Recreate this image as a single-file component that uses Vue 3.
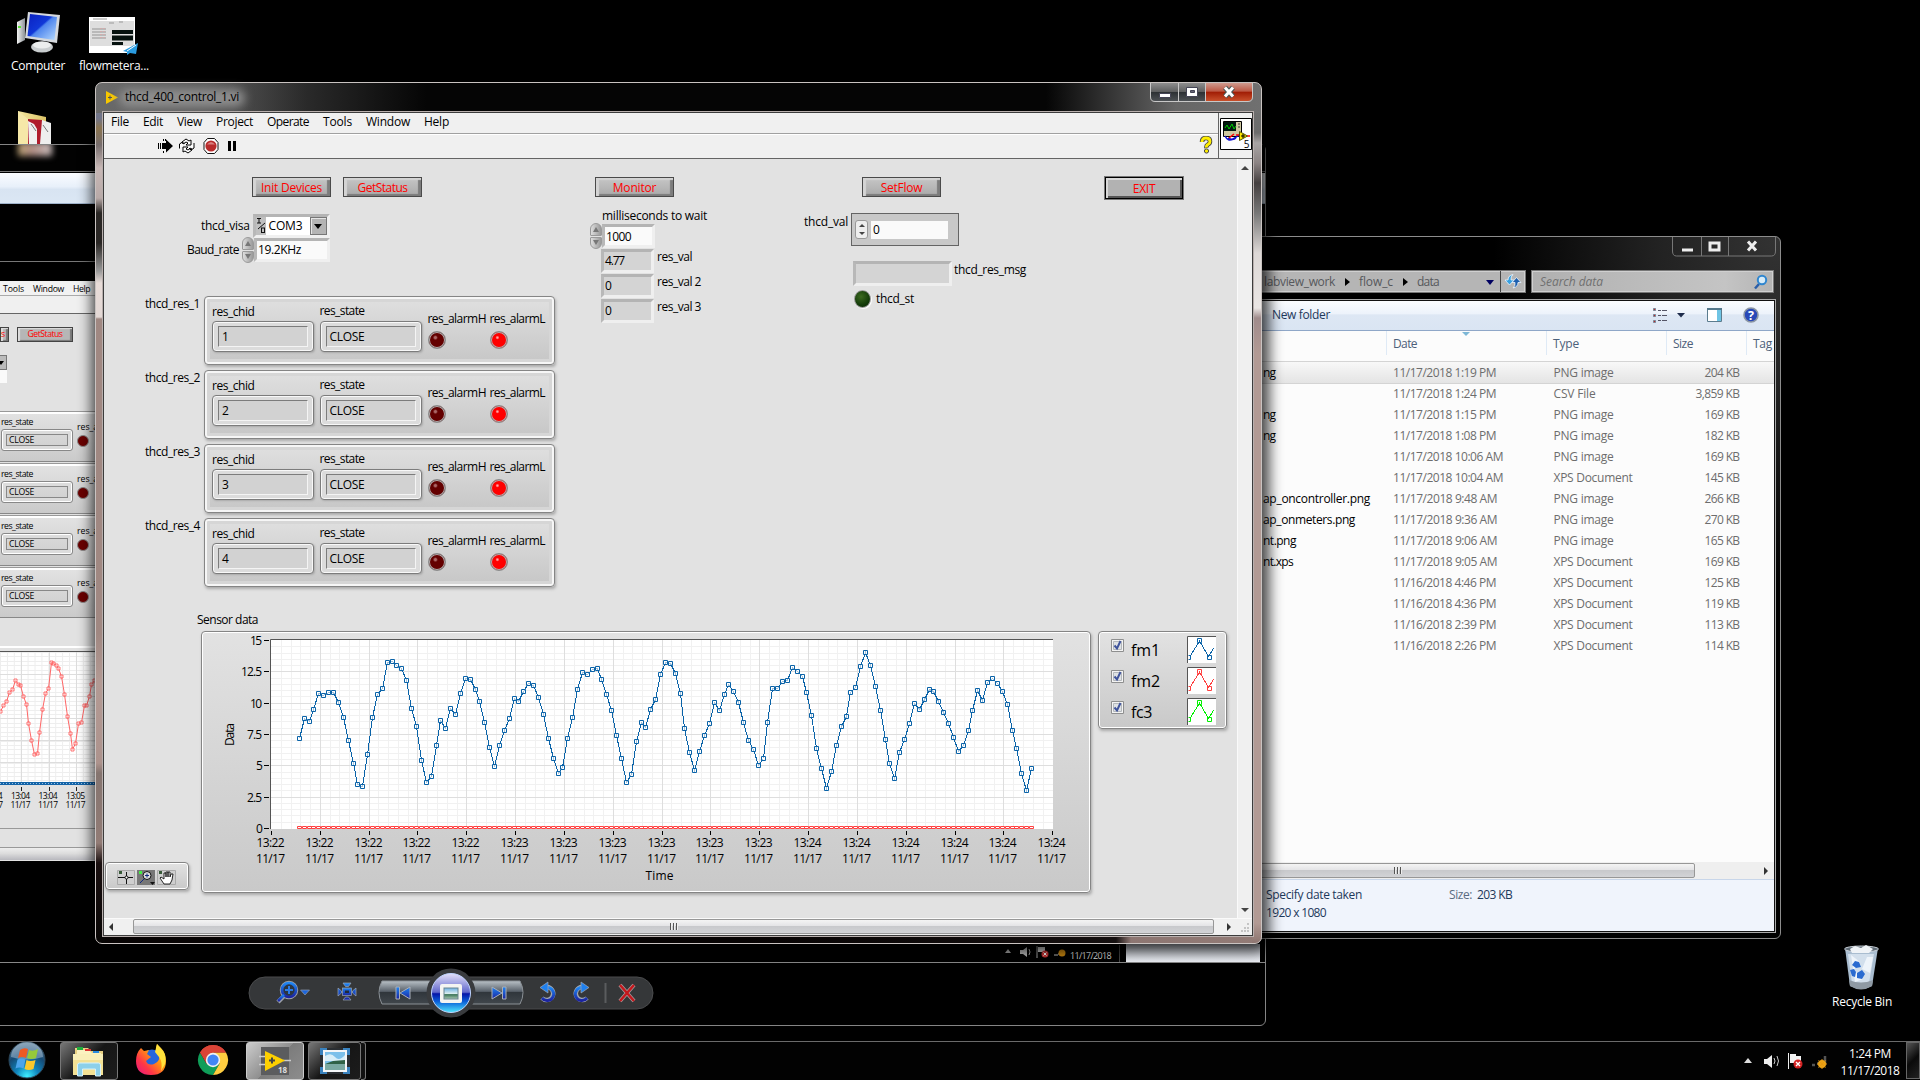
<script setup>
// Stretches or tightens a label so that it takes exactly the given width.
const vFit = {
  mounted(el, { value }) {
    const w = el.getBoundingClientRect().width
    el.style.letterSpacing = (value - w) / el.textContent.length + 'px'
  }
}

const menus = [['File', 18], ['Edit', 20], ['View', 25], ['Project', 37], ['Operate', 42], ['Tools', 29], ['Window', 44], ['Help', 25]]
const monitorVals = [['4.77', 19, 'res_val', 35], ['0', 6, 'res_val 2', 44], ['0', 6, 'res_val 3', 44]]
const files = [
  ['ng', 12, '11/17/2018 1:19 PM', 103, 'PNG image', 60, '204 KB', 35],
  ['', 0, '11/17/2018 1:24 PM', 103, 'CSV File', 42, '3,859 KB', 44],
  ['ng', 12, '11/17/2018 1:15 PM', 103, 'PNG image', 60, '169 KB', 35],
  ['ng', 12, '11/17/2018 1:08 PM', 103, 'PNG image', 60, '182 KB', 35],
  ['', 0, '11/17/2018 10:06 AM', 110, 'PNG image', 60, '169 KB', 35],
  ['', 0, '11/17/2018 10:04 AM', 110, 'XPS Document', 79, '145 KB', 35],
  ['ap_oncontroller.png', 107, '11/17/2018 9:48 AM', 104, 'PNG image', 60, '266 KB', 35],
  ['ap_onmeters.png', 92, '11/17/2018 9:36 AM', 104, 'PNG image', 60, '270 KB', 35],
  ['nt.png', 33, '11/17/2018 9:06 AM', 104, 'PNG image', 60, '165 KB', 35],
  ['nt.xps', 30, '11/17/2018 9:05 AM', 104, 'XPS Document', 79, '169 KB', 35],
  ['', 0, '11/16/2018 4:46 PM', 103, 'XPS Document', 79, '125 KB', 35],
  ['', 0, '11/16/2018 4:36 PM', 103, 'XPS Document', 79, '119 KB', 35],
  ['', 0, '11/16/2018 2:39 PM', 103, 'XPS Document', 79, '113 KB', 35],
  ['', 0, '11/16/2018 2:26 PM', 103, 'XPS Document', 79, '114 KB', 35]
]

const firstHalf = '328,415;343,355;358,364;370,328;385,280;400,286;415,277;430,277;445,307;460,352;475,421;490,490;502,553;517,559;532,463;547,352;562,283;577,265;592,187;607,184;619,196;634,205;649,241;664,325;679,379;694,481;709,547;724,529;739,436;751,361;766,385;781,325;796,343;811,280;826,235;841,238;856,268;868,304;883,367;898,442;913,499;928,436;943,391;958,355;973,295;985,304;1000,274;1015,250;1030,256;1045,292;1060,343;1075,415;1090,475;1105,520;1117,502;1132,415;1147,352;1162,268;1177,217;1192,223;1207,208;1222,205;1234,238;1249,283;1264,331;1279,406;1294,475;1309,547;1324,523;1339,424;1354,367;1366,382;1381,328;1396,298;1411,223;1426,187'
const secondHalf = '26,190;39,220;52,280;62,385;74,457;87,511;99,454;112,406;125,370;138,307;150,331;163,283;173,253;186,274;198,307;210,367;223,421;236,448;248,496;261,475;272,367;285,265;296,265;310,244;322,241;335,202;347,214;360,229;370,277;383,346;395,445;408,505;421,565;433,514;446,436;459,379;471,349;482,277;494,262;507,199;519,157;532,196;545,259;557,331;570,418;580,490;593,535;605,457;618,418;630,370;643,310;656,328;669,298;681,268;691,274;704,304;716,337;729,370;742,412;755,454;767,436;780,391;790,331;803,271;815,301;828,247;841,235;853,250;866,274;879,313;892,391;901,445;914,520;927,571;939,505'
const parse = (s, x0, y0, kx, ky) => s.split(';').map(p => {
  const [a, b] = p.split(',').map(Number)
  return [Math.round(x0 + a / kx), Math.round(y0 + b / ky)]
})
const pts = [...parse(firstHalf, -11.5, -31.5, 3, 3), ...parse(secondHalf, 458.5, -31.5, 2.529, 3)]
const line = pts.map(p => p.map(n => n + 0.5).join(',')).join(' ')
const boxes = pts.map(([x, y]) => `M${x - 1.5} ${y - 1.5}h4v4h-4z`).join('')
const zeroBoxes = pts.map(([x]) => `M${x - 1.5} 195.5h4v2h-4z`).join('')
const xTicks = Array.from({ length: 17 }, (_, i) => ({ x: Math.round(70 + i * 48.83), t: i < 5 ? '13:22' : i < 11 ? '13:23' : '13:24' }))
const yTicks = [['15', 12], ['12.5', 21], ['10', 12], ['7.5', 15], ['5', 6], ['2.5', 15], ['0', 6]].map(([t, w], i) => ({ t, w, y: Math.round(9 + i * 31.33) }))
let minor = ''
let major = ''
for (let i = 1; i <= 80; i++) {
  const x = Math.round(70 + i * 9.766) + 0.5
  if (i % 5) minor += `M${x} 9V198`
  else if (i < 80) major += `M${x} 9V198`
}
for (let i = 1; i < 30; i++) {
  const y = Math.round(9 + i * 6.267) + 0.5
  if (i % 5) minor += `M70 ${y}H852`
  else major += `M70 ${y}H852`
}
const legend = [['fm1', 29, '#0a63a8'], ['fm2', 29, '#ff4040'], ['fc3', 21, '#00f000']]

const oldRaw = '0,1118;9,1103;18,1092;27,1070;36,1062;44,1039;53,1049;61,1052;69,1080;78,1101;84,1148;93,1190;101,1227;110,1224;117,1171;126,1113;135,1072;144,1060;152,994;160,996;168,1001;174,1009;183,1029;192,1076;201,1130;209,1174;216,1214;225,1199;233,1148;242,1146;251,1103;259,1103;266,1080;274,1049;281,1040'
const oldPts = parse(oldRaw, 0, -377, 3, 2.529)
const oldLine = oldPts.map(p => p.map(n => n + 0.5).join(',')).join(' ')
const oldBoxes = oldPts.map(([x, y]) => `M${x - 1} ${y - 1}h3v3h-3z`).join('')
let oldGrid = ''
for (let i = 0; i < 14; i++) oldGrid += `M${i * 6.9 + 0.5} 6V139`
for (let i = 0; i < 30; i++) oldGrid += `M0 ${Math.round(6 + i * 4.43) + 0.5}H95`
</script>

<template>
  <main class="desktop">
    <!-- desktop icons -->
    <div class="dicon computer">
      <svg width="48" height="52" viewBox="0 0 48 52">
        <defs>
          <linearGradient id="scr" x1="0" y1="0" x2="1" y2="1"><stop offset="0" stop-color="#0a20c0" /><stop offset=".45" stop-color="#1038d8" /><stop offset=".5" stop-color="#4f86ee" /><stop offset="1" stop-color="#b8dcff" /></linearGradient>
          <linearGradient id="met" x1="0" y1="0" x2="1" y2="0"><stop offset="0" stop-color="#f4f4f4" /><stop offset="1" stop-color="#8c9296" /></linearGradient>
        </defs>
        <path d="M3 11l8-4v22l-8 4z" fill="url(#met)" /><path d="M4 15h3v2H4z" fill="#5be03a" />
        <path d="M14 1l32 3-3 28-32-5z" fill="#d5d9de" /><path d="M16 3l27 3-2.500 23-27-4z" fill="url(#scr)" />
        <ellipse cx="28" cy="36" rx="11" ry="5.500" fill="#c9cdcf" /><ellipse cx="28" cy="34" rx="9" ry="3.500" fill="#eceeee" />
      </svg>
      <span v-fit="54">Computer</span>
    </div>
    <div class="dicon flowmeter">
      <svg width="50" height="38" viewBox="0 0 50 38">
        <path d="M0 0h46v36H0z" fill="#fff" /><path d="M1 4h44v25H1z" fill="#dedede" />
        <path d="M4 2h14M20 6h5M30 5h4" stroke="#999" />
        <path d="M3 12h14M3 15h14M3 18h14M3 21h14" stroke="#b9b9b9" stroke-width="2" /><path d="M12 11v12M15 11v12" stroke="#e8a0a0" stroke-dasharray="1 2" />
        <path d="M23 13h21v4H23zM23 18.500h21v5H23zM23 25h11v3H23z" fill="#06120f" />
        <path d="M34 34l15-8-2 11-6-1-3 2v-3z" fill="#2a9be0" /><path d="M38 34l9-6" stroke="#fff" />
      </svg>
      <span v-fit="70">flowmetera...</span>
    </div>
    <svg class="folder" width="80" height="62" viewBox="0 0 80 62">
      <defs><linearGradient id="ff" x1="0" y1="0" x2="1" y2="0"><stop offset="0" stop-color="#f5e7a0" /><stop offset="1" stop-color="#dcc468" /></linearGradient></defs>
      <path d="M2 0l28 6v27H2z" fill="url(#ff)" /><path d="M12 8l14 1v24H12z" fill="#b01c2c" /><path d="M12 10l6 3 3 5v15h-8z" fill="#f0f0f0" /><path d="M26 9l9 3v21H24z" fill="#eee" /><path d="M15 13l5 7M27 14l5 7" stroke="#777" />
      <path d="M2 0l10 8v25H2z" fill="#f6e8a8" />
    </svg>

    <!-- photo viewer behind -->
    <section class="viewer">
      <div class="v-title"><i></i></div>
      <div class="v-tool"></div>
      <div class="v-picture">
        <div class="old">
          <div class="old-menu"><span v-fit="21">Tools</span><span v-fit="31">Window</span><span v-fit="17">Help</span></div>
          <div class="old-bar"></div>
          <div class="old-btns"><span class="old-btn cut">s</span><span class="old-btn"><b v-fit="35">GetStatus</b></span></div>
          <div class="old-combo"><i></i></div>
          <div class="old-field"></div>
          <div class="old-clusters">
            <div v-for="n in 4" :key="n" class="old-cluster">
              <div><span v-fit="32">res_state</span><p><b v-fit="25">CLOSE</b></p></div>
              <div class="old-al"><span>res_a</span><i></i></div>
            </div>
          </div>
          <svg class="old-chart" width="95" height="184" viewBox="0 0 95 184">
            <path d="M0 .5H95" stroke="#fff" stroke-width="3" /><path d="M0 5.500H95" stroke="#555" />
            <path d="M0 6H95V138H0z" fill="#fff" /><path :d="oldGrid" stroke="#eee" /><path d="M21.500 6V138M49.500 6V138M76.500 6V138M0 28.500H95M0 50.500H95M0 72.500H95M0 94.500H95M0 116.500H95" stroke="#ddd" />
            <polyline :points="oldLine" fill="none" stroke="#f66" /><path :d="oldBoxes" fill="#fff" fill-opacity=".5" stroke="#ff5454" stroke-width=".8" />
            <path d="M0 137.500H95" stroke="#1464a8" stroke-width="3" /><path d="M0 137.500H95" stroke="#9cc4e4" stroke-dasharray="1 2" />
            <path d="M21.500 141v4M49.500 141v4M76.500 141v4" stroke="#222" />
            <g v-for="x in [-7, 20.500, 48, 75.500]" :key="x" text-anchor="middle" font-size="8.500"><text :x="x" y="153" textLength="19">{{ x > 70 ? '13:05' : '13:04' }}</text><text :x="x" y="162" textLength="20">11/17</text></g>
            <path d="M0 182.500H95" stroke="#999" />
          </svg>
          <div class="old-scroll"></div>
        </div>
        <div class="old-tray">
          <svg width="66" height="14" viewBox="0 0 66 14"><path d="M2 8l3-4 3 4z" fill="#aaa" /><path d="M17 5h3l4-3v10l-4-3h-3z" fill="#bbb" /><path d="M26 4q2 3 0 6" stroke="#aaa" fill="none" /><path d="M34 1v12" stroke="#aaa" /><path d="M35 2h7v5h-7z" fill="#ccc" /><circle cx="42" cy="9" r="3.500" fill="#c93636" /><path d="M40.500 7.500l3 3m0-3l-3 3" stroke="#fff" /><path d="M51 10h4M55 9h4" stroke="#666" stroke-width="2" /><circle cx="59" cy="8" r="3.500" fill="#c98710" /></svg>
          <span v-fit="41">11/17/2018</span>
        </div>
        <div class="old-white"></div>
      </div>
      <div class="v-controls">
        <svg width="406" height="52" viewBox="0 0 406 52">
          <defs>
            <linearGradient id="seg" x1="0" y1="0" x2="0" y2="1"><stop offset="0" stop-color="#b8c0c6" /><stop offset=".45" stop-color="#59616a" /><stop offset=".5" stop-color="#30363c" /><stop offset="1" stop-color="#41474c" /></linearGradient>
            <linearGradient id="ib" x1="0" y1="0" x2="0" y2="1"><stop offset="0" stop-color="#1e86f4" /><stop offset="1" stop-color="#1b24a0" /></linearGradient>
            <linearGradient id="orbb" x1="0" y1="0" x2="0" y2="1"><stop offset="0" stop-color="#e4e0fa" /><stop offset=".48" stop-color="#6168cc" /><stop offset=".52" stop-color="#0515a8" /><stop offset=".72" stop-color="#0b60d8" /><stop offset="1" stop-color="#52e8ff" /></linearGradient>
            <linearGradient id="land" x1="0" y1="0" x2="0" y2="1"><stop offset="0" stop-color="#6cb0e4" /><stop offset=".5" stop-color="#d8ecee" /><stop offset=".6" stop-color="#3d7558" /><stop offset="1" stop-color="#a9c8b2" /></linearGradient>
          </defs>
          <rect x="1" y="10" width="404" height="32" rx="16" fill="#353739" stroke="#4a4b4d" />
          <path d="M134 14h58v23h-58q-6-11.500 0-23zM272 14h-58v23h58q6-11.500 0-23z" fill="url(#seg)" stroke="#8a9096" />
          <circle cx="203" cy="26" r="24.500" fill="#393b3e" /><circle cx="203" cy="26" r="19.500" fill="url(#orbb)" stroke="#bfd4ff" />
          <rect x="192" y="17" width="22" height="19" rx="2" fill="#f4f4f2" /><rect x="196" y="21" width="14" height="11" fill="url(#land)" stroke="#6b8592" />
          <g fill="none" stroke="#9ba0a8" stroke-width="4.500"><circle cx="41" cy="23" r="7" /><path d="M36 29l-6 6" /></g>
          <g fill="none" stroke="url(#ib)" stroke-width="2.700"><circle cx="41" cy="23" r="7" fill="#2b3540" /><path d="M36 28l-6 6" /></g>
          <path d="M41 19v8M37 23h8" stroke="#2a7ae6" stroke-width="2" />
          <path d="M52.500 23h9l-4.500 5z" fill="#1d66dd" stroke="#8c9aaa" stroke-width=".7" />
          <g fill="url(#ib)" stroke="#9aa6b4" stroke-width=".7"><path d="M95 16h8l-2.500 3.500h-3zM95 33h8l-2.500-3h-3zM90 21v8l3.500-3v-2zM108 21v8l-3.500-3v-2z" /><rect x="94.500" y="21" width="9" height="7.500" /></g><rect x="97" y="23.500" width="4" height="2.500" fill="#222a38" />
          <g fill="url(#ib)" stroke="#a8aeb8" stroke-width="1"><path d="M148 20h3.500v12H148zM162 20v12l-10-6zM258 20h-3.500v12h3.500zM244 20v12l10-6z" /></g>
          <g fill="none" stroke="#a2a8b2" stroke-width="4.500"><path d="M299 20a6.500 6.500 0 1 1-5 11M334 20a6.500 6.500 0 1 0 5 11" /></g>
          <g fill="none" stroke="url(#ib)" stroke-width="3"><path d="M299 20.500a6.500 6.500 0 1 1-5 10.500M334 20.500a6.500 6.500 0 1 0 5 10.500" /></g>
          <g fill="#1f80ee" stroke="#a2a8b2" stroke-width=".7"><path d="M300 15v11l-8-5.500zM333 15v11l8-5.500z" /></g>
          <path d="M357.500 16v20" stroke="#5a5c5e" stroke-width="2" />
          <path d="M372 18l14 16M386 18l-14 16" stroke="#a89a9c" stroke-width="4" /><path d="M372 18l14 16M386 18l-14 16" stroke="#c4171c" stroke-width="2.500" />
        </svg>
      </div>
    </section>

    <!-- explorer window -->
    <section class="explorer">
      <div class="x-caption">
        <svg width="104" height="20" viewBox="0 0 104 20"><path d="M.5 0v14q0 5 4 5h95q4 0 4-5V0M29.500 0v19M56.500 0v19" fill="none" stroke="#777" /><path d="M10 11.500h11v3H10z" fill="#eee" /><path d="M38 6h9v7h-9z" fill="none" stroke="#eee" stroke-width="3" /><path d="M76 4.500l8 9M84 4.500l-8 9" stroke="#eee" stroke-width="3" /></svg>
      </div>
      <div class="x-address">
        <div class="x-path">
          <span v-fit="71">labview_work</span><i class="tri"></i><span v-fit="34">flow_c</span><i class="tri"></i><span v-fit="22">data</span><i class="tri down"></i>
          <div class="x-refresh"><svg width="18" height="16" viewBox="0 0 18 16"><g stroke="#eef6ff" stroke-width=".8"><path d="M1 7l4.500 5L10 7H7Q6.500 3.500 9 1.500 4 2.500 4 7z" fill="#38a0e0" /><path d="M17 9.500L12.500 4.500 8 9.500h3q.500 3.500-2 5.500 5-1 5-5.500z" fill="#1d5fae" /></g></svg></div>
        </div>
        <div class="x-search"><span v-fit="63">Search data</span><svg width="16" height="16" viewBox="0 0 16 16"><path d="M6 10l-4 4.500" stroke="#2a5ea8" stroke-width="2.500" /><circle cx="9" cy="6" r="4.200" fill="#d8ecf8" stroke="#2f86cf" stroke-width="2" /></svg></div>
      </div>
      <div class="x-client">
        <div class="x-tool">
          <span v-fit="58">New folder</span>
          <svg width="110" height="20" viewBox="0 0 110 20"><path d="M2.500 3.500h2v2h-2zM2.500 9.500h2v2h-2zM2.500 15.500h2v2h-2z" fill="#c22" stroke="#789" /><path d="M7 5.500h3M11 5.500h5M7 10.500h3M11 10.500h5M7 15.500h3M11 15.500h5" stroke="#556" /><path d="M26 8h8l-4 4.500z" fill="#1e2c4c" /><path d="M56.500 3.500h14v13h-14z" fill="#fff" stroke="#5b7c8e" /><path d="M66 4h4v12h-4z" fill="#6fc4e4" /><path d="M56 4h15" stroke="#54788c" stroke-width="2" /><circle cx="100" cy="10" r="7" fill="#2848b8" stroke="#8b96a4" stroke-width="1.600" /><text x="100" y="14.500" text-anchor="middle" font-size="12.500" font-weight="700" fill="#fff">?</text></svg>
        </div>
        <div class="x-head"><span class="h0"></span><span class="h1"><b v-fit="24">Date</b></span><span class="h2"><b v-fit="26">Type</b></span><span class="h3"><b v-fit="20">Size</b></span><span class="h4"><b v-fit="19">Tag</b></span></div>
        <div class="x-list">
          <div v-for="(f, i) in files" :key="i" class="x-row" :class="{ sel: i === 0 }">
            <span class="c0"><b v-if="f[0]" v-fit="f[1]">{{ f[0] }}</b></span><span class="c1"><b v-fit="f[3]">{{ f[2] }}</b></span><span class="c2"><b v-fit="f[5]">{{ f[4] }}</b></span><span class="c3"><b v-fit="f[7]">{{ f[6] }}</b></span>
          </div>
        </div>
        <div class="x-scroll"><div class="thumb"><i></i></div><em></em></div>
        <div class="x-details"><div><span v-fit="96">Specify date taken</span><span v-fit="60">1920 x 1080</span></div><div class="sz"><span v-fit="23">Size:</span><b v-fit="35">203 KB</b></div></div>
      </div>
    </section>

    <!-- instrument window -->
    <section class="vi">
      <header class="vi-title">
        <svg width="14" height="14" viewBox="0 0 14 14"><path d="M1 0l12 6.500L1 13z" fill="#f8c800" /><path d="M3 6.500h4M5 4.500v4" stroke="#555" /></svg>
        <span v-fit="114">thcd_400_control_1.vi</span>
        <svg class="caps" width="103" height="20" viewBox="0 0 103 20">
          <defs>
            <linearGradient id="cg" x1="0" y1="0" x2="0" y2="1"><stop offset="0" stop-color="#8e8e8e" /><stop offset=".48" stop-color="#5e5f60" /><stop offset=".5" stop-color="#2c3033" /><stop offset="1" stop-color="#4c5054" /></linearGradient>
            <linearGradient id="cr" x1="0" y1="0" x2="0" y2="1"><stop offset="0" stop-color="#cf9a8e" /><stop offset=".46" stop-color="#bc5844" /><stop offset=".5" stop-color="#a01c04" /><stop offset="1" stop-color="#c8502c" /></linearGradient>
          </defs>
          <path d="M1 0h28v18H5q-4 0-4-4z" fill="url(#cg)" /><path d="M29 0h26v18H29z" fill="url(#cg)" /><path d="M55 0h47v14q0 4-4 4H55z" fill="url(#cr)" />
          <path d="M.5 0v14q0 4.500 4.500 4.500h93q4.500 0 4.500-4.500V0M28.500 0v18M55.500 0v18" fill="none" stroke="#c8c8c8" />
          <path d="M9.500 10.500h11v4h-11z" fill="#fff" stroke="#445" /><path d="M36.500 4.500h11v9h-11z" fill="#fff" stroke="#445" /><path d="M40.500 7.500h4v2h-4z" fill="#667" stroke="#445" /><path d="M75 4.500l8 9M83 4.500l-8 9" stroke="#455" stroke-width="5" /><path d="M75 4.500l8 9M83 4.500l-8 9" stroke="#fff" stroke-width="3" />
        </svg>
      </header>
      <div class="vi-client">
        <div class="vi-top">
          <div class="vi-bars">
            <nav class="vi-menu"><span v-for="m in menus" :key="m[0]" v-fit="m[1]">{{ m[0] }}</span></nav>
            <div class="vi-tool">
              <svg width="90" height="20" viewBox="0 0 90 20">
                <path d="M7 7h4V3.500l7 6.500-7 6.500V13H7z" fill="#000" /><path d="M3.500 7v6M5.500 7v6M8.500 3v2M8.500 15v2M10.500 3v2" stroke="#000" />
                <g fill="#fff" stroke="#000" stroke-width="1"><path d="M27 6l4-3 3 2 2-1v5h-5l2-2-2-1-3 2zM39 7v5l-3 2-2-2M37 14l-4 3-3-2-2 1v-5h5l-2 2 2 1 3-2zM24.500 12.500V8l3-2 2 2" /></g>
                <path d="M52.500 2.500h7l3.500 4v7l-3.500 4h-7l-3.500-4v-7z" fill="#fff" stroke="#111" /><circle cx="56" cy="10" r="5.600" fill="#b82c2c" /><path d="M52 8.500q4-5 8 0" fill="#d88080" />
                <path d="M73 5h3v10h-3zM78 5h3v10h-3z" fill="#000" />
              </svg>
              <svg width="14" height="18" viewBox="0 0 14 18"><path d="M3 6q0-4 4-4t4 3.500q0 2-2 3T7.500 12" fill="none" stroke="#444" stroke-width="4.500" /><path d="M3 6q0-4 4-4t4 3.500q0 2-2 3T7.500 11.500" fill="none" stroke="#ffee00" stroke-width="2.800" /><circle cx="7.500" cy="15" r="2.100" fill="#ffee00" stroke="#444" /></svg>
            </div>
          </div>
          <div class="vi-icon">
            <svg width="32" height="32" viewBox="0 0 32 32"><path d="M.5.5h31v31H.5z" fill="#fff" stroke="#000" /><path d="M3.500 3.500h18v15h-18z" fill="#cfc8a0" stroke="#000" /><path d="M4 4h12v9H4z" fill="#021a10" /><path d="M5 10l2-3 2 4 3-5 2 5 2-3" stroke="#0c0" fill="none" /><path d="M18 6h2M18 9h2" stroke="#333" /><path d="M5 18q3 6 8 3t6-4M8 20q5 3 8 0" stroke="#1111d0" fill="none" stroke-width="1.500" /><path d="M9 20l5-4M16 17h4M27 18h3" stroke="#f00" stroke-width="1.500" /><path d="M19.500 13.500v9l8-4.500z" fill="#ffe800" stroke="#550" /><path d="M21 18h4M23 16v4" stroke="#000" /><text x="26.500" y="30" text-anchor="middle" font-size="10">5</text></svg>
          </div>
        </div>
        <div class="vi-mid">
          <div class="panel">
            <div class="controls">
              <div class="colA">
                <div class="btnrow"><button class="btn"><span v-fit="61">Init Devices</span></button><button class="btn"><span v-fit="50">GetStatus</span></button></div>
                <div class="visa"><span v-fit="48.500">thcd_visa</span><div class="visabox"><svg width="10" height="17" viewBox="0 0 10 17"><path d="M1 1.500h4M3 2v4M1 6h4M9 6l-7 6" stroke="#111" fill="none" /><rect x="5.500" y="11" width="3" height="4.500" fill="none" stroke="#111" /></svg><b><i v-fit="34">COM3</i></b><em></em></div></div>
                <div class="baud"><span v-fit="52">Baud_rate</span><div class="spin"><i></i><i></i></div><div class="sunk white w76"><b v-fit="43">19.2KHz</b></div></div>
                <div v-for="n in 4" :key="n" class="crow">
                  <span v-fit="55">thcd_res_{{ n }}</span>
                  <div class="cluster">
                    <div class="f1"><span v-fit="42.500">res_chid</span><div class="raised"><p>{{ n }}</p></div></div>
                    <div class="f2"><span v-fit="45">res_state</span><div class="raised"><p><b v-fit="35">CLOSE</b></p></div></div>
                    <div class="f3"><span v-fit="58.500">res_alarmH</span><i class="led dark"></i></div>
                    <div class="f4"><span v-fit="55.500">res_alarmL</span><i class="led"></i></div>
                  </div>
                </div>
              </div>
              <div class="colB">
                <button class="btn"><span v-fit="43.500">Monitor</span></button>
                <label><span v-fit="105">milliseconds to wait</span></label>
                <div class="msrow"><div class="spin"><i></i><i></i></div><div class="sunk white w53"><b v-fit="25">1000</b></div></div>
                <div v-for="(m, i) in monitorVals" :key="i" class="mrow"><div class="sunk w53"><b v-fit="m[1]">{{ m[0] }}</b></div><span v-fit="m[3]">{{ m[2] }}</span></div>
              </div>
              <div class="colC">
                <button class="btn"><span v-fit="41.500">SetFlow</span></button>
                <div class="vrow"><span v-fit="44">thcd_val</span><div class="vbox"><div class="sp2"><i></i><i></i></div><p>0</p></div></div>
                <div class="msgrow"><div class="sunk w99"></div><span v-fit="72">thcd_res_msg</span></div>
                <div class="strow"><i class="gled"></i><span v-fit="38">thcd_st</span></div>
              </div>
              <button class="exit"><span v-fit="22.500">EXIT</span></button>
            </div>
            <div class="chartlabel"><span v-fit="61">Sensor data</span></div>
            <div class="chartrow">
              <div class="chart">
                <svg width="888" height="260" viewBox="1 1 888 260">
                  <path d="M70 9H852V198H70z" fill="#fff" /><path :d="minor" stroke="#f1f1f1" /><path :d="major" stroke="#dedede" />
                  <path d="M69.500 198V8.500H852" stroke="#555" fill="none" />
                  <g v-for="t in yTicks" :key="t.t"><text :x="61 - t.w" :y="t.y + 4.500" :textLength="t.w">{{ t.t }}</text><path :d="`M63 ${t.y + 0.5}h5`" stroke="#000" /></g>
                  <g v-for="(t, i) in xTicks" :key="i"><path :d="`M${t.x + 0.5} 200v4`" stroke="#000" /><text :x="t.x - 14.500" y="216" textLength="28">{{ t.t }}</text><text :x="t.x - 15" y="231.500" textLength="29">11/17</text></g>
                  <text x="444.500" y="248.500" textLength="28">Time</text>
                  <text x="-12" y="4.500" textLength="23" transform="translate(28,103) rotate(-90)">Data</text>
                  <polyline :points="line" fill="none" stroke="#0a63a8" shape-rendering="crispEdges" /><path :d="boxes" fill="#fff" fill-opacity=".6" stroke="#0a63a8" />
                  <path :d="zeroBoxes" fill="#fff" stroke="#ff4040" />
                </svg>
              </div>
              <div class="legend">
                <div v-for="l in legend" :key="l[0]" class="lrow">
                  <svg class="chk" width="13" height="13" viewBox="0 0 13 13"><path d="M.5.5h12v12H.5z" fill="#f4f4f4" stroke="#8e8f8f" /><path d="M2.500 2.500h8v8h-8z" fill="#dfe2e4" stroke="#b4b8bc" /><path d="M3.500 6.500l2.500 3 3.500-7.500" fill="none" stroke="#40549c" stroke-width="2" /></svg>
                  <span v-fit="l[1]">{{ l[0] }}</span>
                  <svg width="29" height="27" viewBox="0 0 29 27"><path d="M0 0h29v27H0z" fill="#fff" /><path d="M.5 27V.5H29" stroke="#555" fill="none" /><g :stroke="l[2]" fill="none"><path d="M3 20.500L12.500 5l9 15.500 5-8" shape-rendering="crispEdges" /><path d="M1.500 19.500h2v4h-2M10.500 2.500h4v4h-4zM20.500 19.500h4v4h-4z" /></g></svg>
                </div>
              </div>
            </div>
            <div class="palette">
              <svg width="82" height="26" viewBox="0 0 82 26"><path d="M11.500 7.500h17v14h-17zM51.500 7.500h18v14h-18z" fill="#cfcfcf" stroke="#aaa" /><path d="M31 7h18v15H31z" fill="#777" /><path d="M13 8h3v3h-3zM53 8h3v3h-3z" fill="#385a38" /><path d="M33 8h3v3h-3z" fill="#4e4" /><path d="M12 14.500h15M20.500 9v12" stroke="#111" /><circle cx="20.500" cy="14.500" r="1.500" fill="#fff" stroke="#111" /><circle cx="41" cy="12.500" r="4" fill="#ddd" stroke="#111" /><path d="M38 16l-4 4M39 12.500h4M41 10.500v4" stroke="#112a80" /><path d="M44 19h5l-2.500 3z" fill="#111" /><path d="M58 21l-4-6 1-1 3 2V10h2v4V9h2v5V9h2v5l1-3h2l-1 6-2 4z" fill="#fff" stroke="#111" stroke-width=".9" /></svg>
            </div>
          </div>
          <div class="vscroll"><i></i><i class="dn"></i></div>
        </div>
        <div class="hscroll"><em></em><div class="thumb"><i></i></div><em class="r"></em><svg width="14" height="14" viewBox="0 0 14 14"><path d="M10 3h2v2h-2zM7 7h2v2H7zM10 7h2v2h-2zM4 10h2v2H4zM7 10h2v2H7zM10 10h2v2h-2z" fill="#c4c4c4" /></svg></div>
      </div>
    </section>

    <!-- recycle bin -->
    <div class="dicon bin">
      <svg width="38" height="46" viewBox="0 0 38 46"><path d="M2 3l5 38q12 6 22 0l6-38z" fill="#a9bdd0" /><path d="M5 9l4 29q9 3 17 0l5-29z" fill="#d2dfec" /><path d="M8 10l9 7-6 8 9 9-8 3zM24 12l-5 12 8 4 3-16z" fill="#eef4fa" /><ellipse cx="18.500" cy="4" rx="17" ry="3" fill="#5f6b76" stroke="#c8d0d8" /><path d="M7 4l5-3 6 2 5-3 7 4-4 4H9z" fill="#eff3f7" /><path d="M9 20l3-4 4 1 2 5-5 1zM7 25l4-1 2 3-1 5-3-1zM14 28l5-3 3 4-3 5-5-1z" fill="#2a6bd0" /><path d="M7 41q11 7 22 0l1-6q-12 5-24 0z" fill="#8f9aa4" /></svg>
      <span v-fit="60">Recycle Bin</span>
    </div>

    <!-- taskbar -->
    <footer class="taskbar">
      <svg class="orb" width="38" height="38" viewBox="0 0 38 38">
        <defs><radialGradient id="so" cx=".5" cy=".95" r=".9"><stop offset="0" stop-color="#3ff0ff" /><stop offset=".35" stop-color="#0f84bc" /><stop offset=".7" stop-color="#164a74" /><stop offset="1" stop-color="#5b7a92" /></radialGradient></defs>
        <circle cx="19" cy="19" r="18" fill="url(#so)" stroke="#2c4658" /><path d="M3 16a16 15 0 0 1 32 0q-16 5-32 0z" fill="#c8dcec" opacity=".42" />
        <path d="M12 9q4-3 8-1l-2 9q-4-2-8 0z" fill="#ee5a24" /><path d="M21 9q4 2 9-1l-2 9q-5 2-9 0z" fill="#96c93a" /><path d="M9.500 18.500q4-2 8 0l-2 9q-4-2-8 0z" fill="#4ba4ec" /><path d="M18.500 19q4 2 9 0l-2 9q-5 2-9 0z" fill="#fbc82c" />
      </svg>
      <div class="tb exp"><svg width="40" height="34" viewBox="0 0 40 34"><path d="M6 4h13l3 3h12v24H6z" fill="#e8d184" /><path d="M8 6h12l3 3h9l-2 20H8z" fill="#fbf2c0" /><path d="M4 10h30v21H4z" fill="#f3e194" /><path d="M4 10h30v6H4z" fill="#f9efb8" /><path d="M8 3h6v3H8z" fill="#1fae3c" /><path d="M16 5h6v2h-6z" fill="#d33" /><path d="M24 7h6v2h-6z" fill="#2a8be0" /><path d="M8.500 32V21q0-2 2-2h19q2 0 2 2v11h-5v-7h-13v7z" fill="#8cd0ea" stroke="#d5f2fc" /></svg></div>
      <svg class="ff" width="32" height="34" viewBox="0 0 32 34">
        <defs><linearGradient id="fx" x1="1" y1="0" x2="0" y2="1"><stop offset="0" stop-color="#fff44f" /><stop offset=".4" stop-color="#ff980e" /><stop offset=".7" stop-color="#ff3647" /><stop offset="1" stop-color="#e31587" /></linearGradient></defs>
        <circle cx="17" cy="16" r="10.500" fill="#2466dc" /><path d="M6 4l3 3 5-1-2 4 4 3-5 4q2 5 8 3 7-3 5-10l-3-6 1-4 4 4q5 5 5 13 0 14-15 14T1 17Q1 9 6 4z" fill="url(#fx)" /><path d="M22 0l4 5q6 5 4 15l-4 7q2-9-2-14l-4-5z" fill="#ffe23c" />
      </svg>
      <svg class="cr" width="32" height="32" viewBox="0 0 32 32"><path d="M16 16L3 8.500A15 15 0 0 1 29 8.500H16z" fill="#db4437" /><path d="M16 16l-6.500 3.750L3 8.500A15 15 0 0 0 16 31l6.500-11.250z" fill="#0f9d58" /><path d="M16 8.500h13A15 15 0 0 1 16 31l6.500-11.250z" fill="#ffcd40" /><path d="M3 8.500l6.500 11.250L16 16V8.500h13A15 15 0 0 0 3 8.500z" fill="#db4437" /><circle cx="16" cy="16" r="7.200" fill="#f1f1f1" /><circle cx="16" cy="16" r="5.600" fill="#4285f4" /></svg>
      <div class="tb lv"><svg width="34" height="30" viewBox="0 0 34 30"><path d="M3 1h28v28H3z" fill="#5b5c5e" /><path d="M1 10.500h7M1 18.500h7M25 14.500h8" stroke="#ccc" stroke-width="1.500" /><path d="M7 5l20 9.500L7 25z" fill="#fdd000" /><path d="M11 14.500h6M14 11.500v6" stroke="#444" stroke-width="2" /><text x="20" y="27" font-size="8" font-weight="700" fill="#ddd">18</text></svg></div>
      <div class="tb pv"><svg width="32" height="28" viewBox="0 0 32 28"><path d="M1 1h30v26H1z" fill="#3a82be" /><path d="M8 1h16v26H8zM1 8h30v12H1z" fill="#2b2f33" /><path d="M4 3h24v22H4z" fill="#f4f6f8" /><path d="M6 5h20v18H6z" fill="#7cc0ea" /><path d="M6 9q6-4 10 1t10-2v6H6z" fill="#d8eef8" /><path d="M6 17l8-3 12-1v4H6z" fill="#2f6247" /><path d="M6 17h20v6H6z" fill="#7aa9a2" /></svg></div>
      <i class="stack"></i>
      <div class="tray">
        <svg width="88" height="20" viewBox="0 0 88 20"><path d="M1 12l4-5 4 5z" fill="#ddd" /><path d="M21 8h3l5-4v13l-5-4h-3z" fill="#eee" /><path d="M31 7q2 3 0 6M34 5q3 5 0 10" stroke="#ccc" fill="none" /><path d="M45.500 2v16" stroke="#eee" /><path d="M47 3h6v2h5v7H47z" fill="#f2f2f2" /><circle cx="55" cy="13" r="4.500" fill="#d32222" /><path d="M53 11l4 4m0-4l-4 4" stroke="#fff" stroke-width="1.400" /><path d="M69 14h3M74 12.500h3M82 5v8" stroke="#555" stroke-width="2.500" /><circle cx="79" cy="13" r="4" fill="#f0a818" /><path d="M79 8v10M74 13h10M75.500 9.500l7 7M82.500 9.500l-7 7" stroke="#e89a10" /></svg>
        <div class="clock"><span v-fit="42">1:24 PM</span><span v-fit="59">11/17/2018</span></div>
        <i class="show"></i>
      </div>
    </footer>
  </main>
</template>

<style>
html, body { margin: 0; background: #000; overflow: hidden; }
</style>

<style scoped>
* { box-sizing: border-box; }
.desktop { position: relative; width: 1920px; height: 1080px; overflow: hidden; background: #000; color: #000; font: 12px/16px "Open Sans", "Noto Sans", sans-serif; }
svg { display: block; flex: none; }
svg text { font-family: "Open Sans", "Noto Sans", sans-serif; }
span, b { display: inline-block; white-space: nowrap; font-weight: 400; flex: none; }
p { margin: 0; }
i, em { font-style: normal; }

.dicon { position: absolute; display: flex; flex-direction: column; align-items: center; color: #fff; text-shadow: 0 1px 2px #000; }
.computer { left: 4px; top: 11px; width: 68px; }
.computer span { margin-top: -5px; }
.flowmeter { left: 76px; top: 17px; width: 76px; }
.flowmeter span { margin-top: 3px; }
.folder { position: absolute; left: 16px; top: 111px; }
.bin { left: 1828px; top: 945px; width: 68px; }
.bin span { margin-top: 3px; }

/* photo viewer */
.viewer { position: absolute; left: -40px; top: 144px; width: 1306px; height: 882px; border: 1px solid #858585; border-radius: 6px; background: #000; display: flex; flex-direction: column; }
.v-title { height: 27px; border-bottom: 1px solid #777; background: #020202; padding-left: 57px; overflow: hidden; }
.v-title i { display: block; width: 34px; height: 14px; margin-top: -3px; background: linear-gradient(90deg, #b8a070, #b08c84 40%, #c8bcbc); filter: blur(3px); }
.v-tool { height: 31px; margin-top: 1px; background: linear-gradient(#fafcff, #e8f0fa 45%, #d8e4f2 55%, #dbe7f4); border-bottom: 1px solid #9fb2ca; flex: none; }
.v-picture { height: 759px; flex: none; border-bottom: 1px solid #888; position: relative; padding: 57px 0 0 39px; overflow: hidden; }
.v-picture::before { content: ''; display: block; height: 1px; background: #777; }
.old { width: 110px; height: 580px; background: #e2e2e2; margin-top: 19px; font-size: 8.700px; line-height: 10px; overflow: hidden; }
.old-menu { height: 15px; background: #f2f2f2; display: flex; gap: 9px; padding: 3px 0 0 3px; border-bottom: 1px solid #aaa; }
.old-bar { height: 18px; background: #f0f0f0; border-bottom: 1px solid #666; }
.old-btns { display: flex; padding-top: 13px; gap: 8px; }
.old-btn { width: 56px; height: 15px; border: 1px solid #444; background: #b6b6b6; box-shadow: inset 2px 1px 1px #ddd, inset -2px -1px 1px #777; color: #f00; text-align: center; line-height: 12px; }
.cut { width: 9px; text-align: left; }
.old-combo { width: 7px; height: 15px; margin-top: 13px; background: #bbb; border: 1px solid #777; border-left: 0; padding-top: 5px; }
.old-combo i { display: block; width: 0; margin-left: -2px; border: 3px solid transparent; border-top: 4px solid #000; border-bottom: 0; }
.old-field { width: 7px; height: 13px; background: #fafafa; }
.old-clusters { margin-top: 29px; }
.old-cluster { height: 50px; margin-bottom: 2px; background: linear-gradient(#e2e2e2, #cacaca); border-top: 2px solid #fff; border-bottom: 1px solid #888; box-shadow: 0 -1px #999; display: flex; padding: 3px 0 0 1px; }
.old-cluster p { width: 72px; height: 22px; margin-top: 2px; border: 1px solid #888; border-radius: 3px; box-shadow: inset 0 0 0 1px #fff, inset 0 0 0 4px #dcdcdc, inset 0 0 0 5px #888; padding: 5px 7px; line-height: 11px; }
.old-al { padding: 5px 0 0 4px; }
.old-al i { display: block; width: 12px; height: 12px; border-radius: 50%; background: #6a0000; border: 1px solid #8a8a8a; margin-top: 3px; }
.old-chart { margin-top: 28px; }
.old-scroll { height: 13px; margin-top: 17px; background: linear-gradient(#eee, #ddd 45%, #b8b8be); border-top: 1px solid #999; }
.old-tray { position: absolute; left: 1042px; top: 741px; width: 117px; height: 18px; display: flex; gap: 1px; color: #ddd; font-size: 9px; line-height: 21px; border-right: 1px solid #444; }
.old-white { position: absolute; left: 1165px; top: 740px; width: 134px; height: 18px; background: linear-gradient(#b8bcc4, #eef1f7); }
.v-controls { padding: 4px 0 0 287px; }

/* explorer */
.explorer { position: absolute; left: 1200px; top: 236px; width: 581px; height: 703px; border: 1px solid #8c8c8c; border-radius: 0 6px 6px 0; padding: 0 4px 5px 0; background: radial-gradient(ellipse at 100% 0, #333 0, #222 15%, #000 35%) #000; display: flex; flex-direction: column; }
.x-caption { height: 33px; display: flex; justify-content: flex-end; flex: none; }
.x-address { display: flex; gap: 5px; flex: none; height: 29px; }
.x-path { width: 325px; height: 23px; border: 1px solid #777; background: #b5b5b5; box-shadow: inset 0 0 0 1px #d0d0d0; display: flex; align-items: center; padding-left: 62px; color: #56585c; }
.tri { border: 4px solid transparent; border-left: 5px solid #000; border-right: 0; margin: 0 9px 0 10px; }
.tri.down { border: 4px solid transparent; border-top: 5px solid #000060; border-bottom: 0; margin: 2px 6px 0 auto; }
.x-refresh { width: 25px; height: 21px; border-left: 1px solid #444; padding: 2px 0 0 3px; }
.x-search { width: 243px; height: 23px; border: 1px solid #777; background: linear-gradient(90deg, #b0b0b0, #c4c4c4 80%, #b4b4b4); box-shadow: inset 0 0 0 1px #d0d0d0; display: flex; justify-content: space-between; align-items: center; padding: 0 4px 0 8px; color: #707070; font-style: italic; }
.x-client { flex: 1; border: 1px solid #aaa; border-left: 0; background: #fcfcfc; display: flex; flex-direction: column; outline: 1px solid #111; outline-offset: -2px; overflow: hidden; }
.x-tool { height: 31px; padding: 0 14px 0 71px; display: flex; justify-content: space-between; align-items: center; background: linear-gradient(#fbfdff, #edf3fb 45%, #dde7f4 50%, #dae5f3); border-bottom: 1px solid #8fa7c8; color: #1e395b; flex: none; }
.x-head { height: 31px; display: flex; color: #4c607a; flex: none; }
.x-head span { height: 24px; border-right: 1px solid #dfeaf6; padding: 5px 0 0 6px; overflow: hidden; }
.h0 { width: 186px; } .h1 { width: 160px; } .h2 { width: 120px; } .h3 { width: 80px; } .h4 { width: 28px; }
.x-head .h4 { border: 0; }
.x-head .h1 { position: relative; }
.h1::after { content: ''; position: absolute; left: 75px; top: 1px; border: 4px solid transparent; border-top: 4px solid #7db7d6; border-bottom: 0; }
.x-list { flex: 1; }
.x-row { height: 21.050px; display: flex; align-items: center; color: #6d6d6d; }
.x-row span { line-height: 20px; }
.sel { background: linear-gradient(#f8f8f8, #e4e4e4); box-shadow: 0 0 0 1px #d4d4d4; }
.c0 { width: 192px; padding-left: 62px; color: #000; } .c1 { width: 160.500px; } .c2 { width: 130px; } .c3 { width: 56px; text-align: right; }
.x-scroll { height: 17px; background: #efefef; display: flex; justify-content: space-between; align-items: center; flex: none; }
.thumb { height: 15px; border: 1px solid #979797; border-radius: 2px; background: linear-gradient(#f4f4f4, #e4e4e6 45%, #c8c9cc 50%, #d2d3d6); display: flex; align-items: center; justify-content: center; }
.thumb i { width: 8px; height: 7px; background: repeating-linear-gradient(90deg, #555 0 1px, #eee 1px 2px, transparent 2px 3px); }
.x-scroll .thumb { width: 494px; justify-content: flex-start; padding-left: 192px; }
.x-scroll em { border: 4px solid transparent; border-left: 4px solid #333; border-right: 0; margin-right: 7px; }
.x-details { height: 53px; background: #f0f4fc; border-top: 1px solid #c8d6ea; display: flex; padding: 7px 0 0 65px; color: #1e395b; flex: none; }
.x-details > div:first-child { width: 183px; display: flex; flex-direction: column; align-items: flex-start; gap: 2px; line-height: 16px; }
.sz { display: flex; gap: 5px; height: 16px; }
.sz span { color: #5a6b80; }

/* instrument window */
.vi { position: absolute; left: 95px; top: 82px; width: 1167px; height: 862px; border: 1px solid #c9c3c1; border-radius: 7px; padding: 0 8px 7px 7px; box-shadow: 2px 2px 14px 5px rgba(0,0,0,.75);
  background:
    linear-gradient(90deg, #6a6a6a 0, #5c5c5c 110px, #2a2a2a 210px, #050505 330px, #050505 950px, #666 1080px, #707070) 0 0 / 100% 30px no-repeat,
    linear-gradient(#777 0, #70748a 35px, #8a7450 45px, #776e6e 62px, #c8b8b6 85px, #b8aaa8 115px, #2a2725 130px, #2a2725 160px, #999 188px, #e8dcd8 200px, #e3d8d5 234px, #a08882 236px, #a08882 550px, #b39a94 600px, #ad938d 680px, #857570 690px, #927c76 760px, #1a1010 780px, #080605) 0 0 / 9px 100% no-repeat,
    linear-gradient(#707070 0, #6c6c6c 50px, #a8a4a4 60px, #8c8484 80px, #443f3f 100px, #777 130px, #ddd8d6 170px, #eae6e4 225px, #a08c8c 235px, #b29a94 270px, #b29a94 840px, #8d7570) 100% 0 / 9px 100% no-repeat,
    linear-gradient(90deg, #080404 0 650px, #151010 1020px, #8d7672 1035px, #927b76) 0 100% / 100% 8px no-repeat; }
.vi-title { height: 29px; display: flex; padding: 0 0 0 2px; }
.vi-title > svg:first-child { margin-top: 8px; }
.vi-title span { margin: 6px 0 0 6px; height: 17px; position: relative; z-index: 0; }
.vi-title span::before { content: ''; position: absolute; z-index: -1; inset: 0 -6px -1px; border-radius: 9px; background: #8e8e8e; filter: blur(5px); }
.vi-title .caps { margin-left: auto; margin-right: 0; }
.vi-client { width: 1150px; height: 824px; border: 1px solid #3c3c3c; box-shadow: 0 0 0 1px #b9b0ae; background: #f0f0f0; display: flex; flex-direction: column; }
.vi-top { height: 46px; display: flex; border-bottom: 1px solid #646464; flex: none; }
.vi-bars { width: 1114px; }
.vi-menu { height: 21px; border-bottom: 1px solid #a0a0a0; display: flex; gap: 14px; padding: 1px 0 0 7px; }
.vi-tool { height: 24px; border-top: 1px solid #fff; display: flex; justify-content: space-between; padding: 1px 5px 0 51px; }
.vi-icon { flex: 1; border-left: 1px solid #646464; padding: 5px 0 0 1px; }
.vi-mid { display: flex; flex: 1; min-height: 0; }
.panel { width: 1133px; background: #e2e2e2; position: relative; display: flex; flex-direction: column; }
.vscroll { flex: 1; background: #f0f0f0; border-left: 1px solid #fafafa; display: flex; flex-direction: column; justify-content: space-between; align-items: center; padding: 7px 0 6px; }
.vscroll i { border: 4px solid transparent; border-bottom: 4px solid #444; border-top: 0; }
.vscroll .dn { border: 4px solid transparent; border-top: 4px solid #444; border-bottom: 0; }
.hscroll { height: 17px; display: flex; align-items: center; border-top: 1px solid #fafafa; padding-bottom: 1px; flex: none; }
.hscroll .thumb { width: 1081px; margin-left: 18px; flex: none; }
.hscroll em { border: 4px solid transparent; border-right: 4px solid #333; border-left: 0; margin-left: 5px; margin-right: 2px; }
.hscroll em.r { border: 4px solid transparent; border-left: 4px solid #333; border-right: 0; margin: 0 4px 0 13px; }
.hscroll > svg { margin-left: auto; margin-right: 1px; }

.controls { display: flex; height: 453px; padding-top: 18px; flex: none; }
.colA { width: 486px; }
.colB { width: 214px; }
.colC { width: 301px; }
.btn { display: block; width: 79px; height: 20px; padding: 0; border: 1px solid #4a4a4a; outline: 0; background: linear-gradient(#c6c6c6, #a9a9a9); box-shadow: inset 3px 2px 1px #d4d4d4, inset -3px -2px 1px #7c7c7c; color: #f00; font: inherit; line-height: 17px; text-align: center; }
.exit { width: 78px; height: 22px; padding: 0; border: 1px solid #000; background: #b2b2b2; box-shadow: inset 2px 2px #d8d8d8, inset -2px -2px #555, 0 0 0 1px #777; color: #f00; font: inherit; line-height: 19px; }
.btnrow { display: flex; gap: 12px; padding-left: 148px; }
.visa { display: flex; align-items: center; gap: 3px; padding-left: 97px; height: 24px; margin-top: 17px; }
.visabox { width: 77px; height: 24px; border: 3px solid; border-color: #b4b4b4 #f0f0f0 #f0f0f0 #b8b8b8; display: flex; background: #c0c0c0; }
.visabox b { width: 44px; background: #fff; padding-left: 3px; line-height: 18px; }
.visabox em { width: 17px; background: #b4b4b4; border: 1px solid #777; box-shadow: inset 1px 1px #e4e4e4; padding: 6px 0 0 3px; }
.visabox em::after { content: ''; display: block; width: 0; border: 4px solid transparent; border-top: 5px solid #000; border-bottom: 0; }
.baud { display: flex; align-items: center; padding-left: 83px; height: 26px; margin-top: -1px; margin-bottom: 33px; }
.spin { width: 12px; height: 26px; display: flex; flex-direction: column; gap: 1px; flex: none; }
.baud .spin { margin-left: 3px; }
.spin i { height: 12.500px; border-radius: 6px 6px 1px 1px; background: linear-gradient(90deg, #ddd, #999); border: 1px solid #9a9a9a; }
.spin i::after { content: ''; display: block; width: 0; margin: 3px 0 0 2px; border: 3px solid transparent; border-bottom: 5px solid #777; border-top: 0; }
.spin i + i { border-radius: 1px 1px 6px 6px; }
.spin i + i::after { border: 3px solid transparent; border-top: 5px solid #777; border-bottom: 0; margin-top: 2px; }
.sunk { height: 24px; border: 3px solid; border-color: #b4b4b4 #efefef #efefef #b8b8b8; background: #d4d4d4; padding-left: 1px; line-height: 18px; flex: none; }
.sunk.white { background: #fafafa; }
.w76 { width: 76px; } .w53 { width: 53px; } .w99 { width: 99px; height: 25px; }
.crow { display: flex; gap: 4px; padding-left: 41px; height: 74px; }
.cluster { width: 351px; height: 69px; border: 1px solid #858585; border-radius: 4px; box-shadow: inset 0 0 0 2px #f6f6f6, inset 0 0 0 5px #d6d6d6, 1px 2px 3px #aaa; background: linear-gradient(#e0e0e0, #c6c6c6); display: flex; padding-left: 7px; }
.f1 { width: 107.500px; padding-top: 7px; } .f2 { width: 108px; padding-top: 6px; } .f3 { width: 62px; padding-top: 14px; } .f4 { padding-top: 14px; }
.f1 .raised { margin-top: 1px; } .f2 .raised { margin-top: 2px; }
.cluster > div > span { display: block; width: max-content; }
.raised { width: 102px; height: 31px; border: 1px solid #7c7c7c; border-radius: 4px; background: #dcdcdc; box-shadow: inset 0 0 0 1px #f8f8f8, 1px 1px 2px #aaa; padding: 4px 5px; }
.raised p { height: 21px; border: 1px solid #7c7c7c; border-right-color: #f4f4f4; border-bottom-color: #f4f4f4; background: #d2d2d2; padding-left: 3px; line-height: 19px; }
.led { display: block; width: 18px; height: 18px; margin-top: 4px; border-radius: 50%; border: 1.500px solid #8a8a8a; box-shadow: inset 0 0 0 1px #b0b0b0; background: radial-gradient(circle at 40% 35%, #faa 0 .5px, #f00 2px); }
.led.dark { background: radial-gradient(circle at 40% 35%, #a66 0 1px, #640000 2.500px); }
.colB .btn { margin-left: 5px; }
.colB label { display: block; padding-left: 12px; margin-top: 11px; height: 16px; }
.msrow { display: flex; align-items: center; height: 26px; margin-top: -1px; }
.msrow .sunk { line-height: 19px; }
.mrow { display: flex; gap: 3px; margin: 0 0 1px 11px; height: 24px; }
.colC .btn { margin-left: 58px; }
.vrow { display: flex; gap: 3px; margin-top: 16px; height: 33px; }
.vrow > span { margin-top: 1px; }
.vbox { width: 108px; height: 33px; border: 1px solid #646464; background: #c8c8c8; display: flex; align-items: center; gap: 3px; padding-left: 3px; }
.sp2 { width: 13px; height: 19px; border: 1px solid #999; border-radius: 3px; background: #eee; display: flex; flex-direction: column; justify-content: space-around; align-items: center; }
.sp2 i { border: 3px solid transparent; border-bottom: 3px solid #444; border-top: 0; }
.sp2 i + i { border: 3px solid transparent; border-top: 3px solid #444; border-bottom: 0; }
.vbox p { width: 77px; height: 18px; background: #fafafa; padding-left: 2px; line-height: 18px; }
.msgrow { display: flex; gap: 2px; margin: 15px 0 0 49px; }
.msgrow > span { margin-top: 1px; }
.strow { display: flex; align-items: center; gap: 5px; margin: 4px 0 0 50px; }
.gled { width: 17px; height: 18px; border-radius: 50%; background: radial-gradient(circle at 40% 35%, #3c6a20, #143c0a 60%, #0c2806); border: 1.500px solid #999; box-shadow: 1px 1px 1px #fff; }
.chartlabel { padding-left: 93px; height: 19px; }
.chartrow { display: flex; gap: 7px; padding-left: 97px; align-items: flex-start; }
.chart, .legend, .palette { border: 1px solid #858585; border-radius: 4px; background: linear-gradient(#e2e2e2, #c9c9c9); box-shadow: inset 0 0 0 1px #fff, 1px 2px 3px #aaa; }
.chart { width: 890px; height: 262px; }
.legend { width: 129px; height: 98px; padding: 4px 0 0 12px; }
.lrow { height: 31px; display: flex; align-items: flex-start; font-size: 16px; }
.lrow span { margin: 5px 0 0 7px; line-height: 18px; }
.lrow > svg:last-child { margin-left: auto; margin-right: 10px; }
.chk { margin-top: 3px; }
.palette { position: absolute; left: 1px; top: 703px; width: 84px; height: 28px; }

/* taskbar */
.taskbar { position: absolute; left: 0; top: 1041px; width: 1920px; height: 39px; border-top: 1px solid #6a6a6a; background: #020202; display: flex; }
.orb { margin-left: 8px; margin-top: -1px; }
.tb { width: 58px; height: 38px; border: 1px solid #777; border-radius: 3px; display: flex; justify-content: center; align-items: center; background: linear-gradient(135deg, #777, #333 35%, #161616 50%, #1c1c1c); }
.exp { margin-left: 14px; }
.ff { margin: 2px 0 0 17px; }
.cr { margin: 2px 0 0 30px; }
.lv { margin-left: 17px; background: linear-gradient(135deg, #ccc, #8f8f8f 50%, #7c7c7c 51%, #8d8d8d); border-color: #ccc; }
.pv { margin-left: 4px; width: 53px; }
.stack { width: 5px; height: 38px; border: 1px solid #777; border-left: 0; border-radius: 0 3px 3px 0; background: #111; }
.tray { margin-left: auto; display: flex; color: #fff; }
.tray > svg { margin-top: 9px; }
.clock { width: 70px; margin-left: 4px; display: flex; flex-direction: column; align-items: center; padding-top: 3px; line-height: 17px; }
.show { width: 14px; height: 37px; margin-left: 1px; border: 1px solid #666; background: linear-gradient(135deg, #555, #0a0a0a 50%, #222); }
</style>
